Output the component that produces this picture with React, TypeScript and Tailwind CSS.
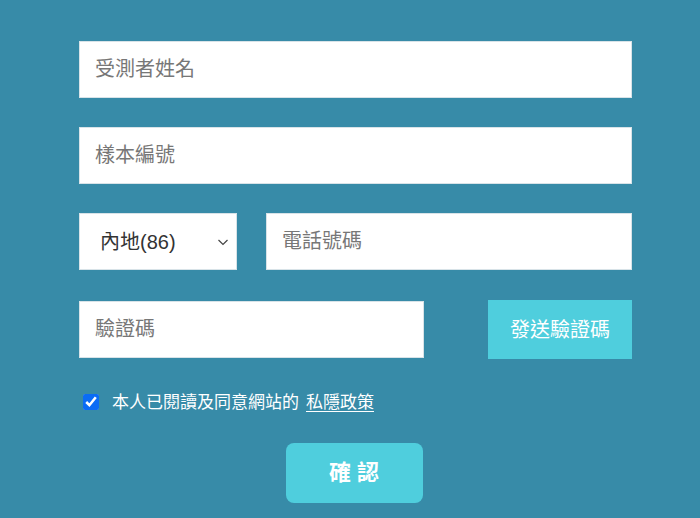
import React, { useState } from 'react'

const font = { fontFamily: '"Liberation Sans", "Noto Sans CJK TC", sans-serif' }

const App: React.FC = () => {
  const [agree, setAgree] = useState(true)

  return (
    <div className="h-[518px] w-[700px] overflow-hidden bg-[#378ba8]" style={font}>
      <div className="ml-[79px] flex w-[553px] flex-col pt-[41px]">
        <input
          placeholder="受測者姓名"
          className="h-[57px] w-full border border-[#d8e3e8] bg-white px-[15px] text-[20px] text-[#333] outline-none placeholder:text-[#777]"
        />
        <input
          placeholder="樣本編號"
          className="mt-[29px] h-[57px] w-full border border-[#d8e3e8] bg-white px-[15px] text-[20px] text-[#333] outline-none placeholder:text-[#777]"
        />
        <div className="mt-[29px] flex gap-[29px]">
          <div className="flex h-[57px] w-[158px] items-center justify-between border border-[#d8e3e8] bg-white pl-[20px] pr-[7px]">
            <span className="text-[20px] text-[#333]">內地(86)</span>
            <svg width="12" height="12" viewBox="0 0 12 12" fill="none" stroke="#444" strokeWidth="1.2">
              <path d="M1.5 4 L6 8.5 L10.5 4" />
            </svg>
          </div>
          <input
            placeholder="電話號碼"
            className="h-[57px] flex-1 border border-[#d8e3e8] bg-white px-[15px] text-[20px] text-[#333] outline-none placeholder:text-[#777]"
          />
        </div>
        <div className="mt-[30px] flex h-[59px] items-center justify-between">
          <input
            placeholder="驗證碼"
            className="h-[57px] w-[345px] border border-[#d8e3e8] bg-white px-[15px] text-[20px] text-[#333] outline-none placeholder:text-[#777]"
          />
          <button className="h-[59px] w-[144px] bg-[#4fcedd] text-[20px] text-white">
            發送驗證碼
          </button>
        </div>
        <label className="mt-[33px] flex h-[20px] items-center pl-[4px] text-[17px] leading-none text-white">
          <input
            type="checkbox"
            checked={agree}
            onChange={(e) => setAgree(e.target.checked)}
            className="h-[16px] w-[16px] accent-[#0b6cf5]"
          />
          <span className="ml-[13px]">本人已閱讀及同意網站的</span>
          <span className="ml-[7px] underline underline-offset-[3px]">私隱政策</span>
        </label>
        <div className="mt-[31px] flex justify-center pr-[3px]">
          <button className="h-[60px] w-[137px] rounded-[8px] bg-[#4fcedd] pl-[6px] text-[22px] font-bold leading-none tracking-[6px] text-white">
            確認
          </button>
        </div>
      </div>
    </div>
  )
}

export default App
